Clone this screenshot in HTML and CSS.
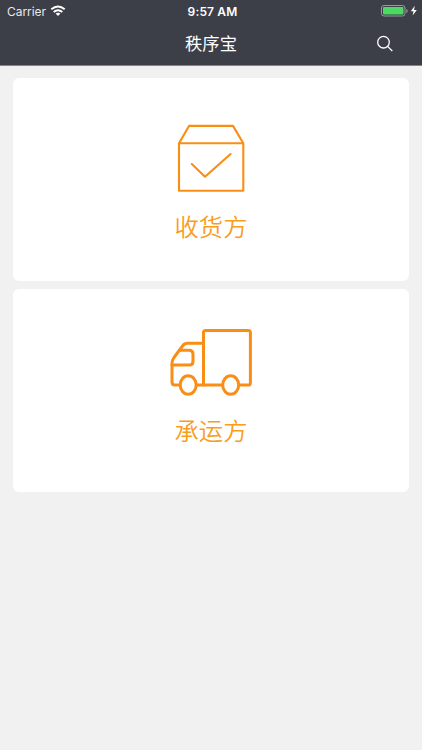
FILE: index.html
```html
<!DOCTYPE html>
<html lang="zh-CN">

<head>
    <meta charset="UTF-8">
    <meta name="viewport" content="width=device-width, initial-scale=1.0">
    <title>秩序宝</title>
    <link rel="stylesheet" href="styles.css">
</head>
<body>
    <header class="header">
        <div class="status-bar">
            <div class="carrier">
                <span>Carrier</span>
                <svg class="wifi" width="16" height="12" viewBox="0 0 16 12">
                    <path d="M1.3 4.3Q8 -1.3 14.7 4.3M3.7 7Q8 3.4 12.3 7" fill="none" stroke="#fff" stroke-width="2"/>
                    <path d="M5.6 8.6Q8 6.8 10.4 8.6L8 11z" fill="#fff"/>
                </svg>
            </div>
            <span class="time">9:57 AM</span>
            <svg class="battery" width="37" height="12" viewBox="0 0 37 12">
                <rect x="0.5" y="0.5" width="23.5" height="10.5" rx="2.5" fill="none" stroke="#9a9ba0"/>
                <rect x="2" y="2" width="20.5" height="7.5" rx="1" fill="#4cd964"/>
                <path d="M25.3 4v4q1.4-.6 1.4-2t-1.4-2z" fill="#9a9ba0"/>
                <path d="M33.8 .8L29.8 6.3H32.5L31.6 10.6L35.8 4.9H33z" fill="#fff"/>
            </svg>
        </div>
        <div class="nav-bar">
            <h1>秩序宝</h1>
            <button class="search" type="button" aria-label="搜索">
                <svg width="18" height="18" viewBox="0 0 18 18">
                    <circle cx="7.5" cy="7.2" r="5.8"/>
                    <path d="M11.6 11.4L16.3 16"/>
                </svg>
            </button>
        </div>
    </header>
    <main class="container">
        <a class="card">
            <svg class="icon-box" width="84" height="72" viewBox="0 0 84 72">
                <path d="M10 20.3L20 2.9H64L74.3 20.3V67.7H10zH74.3"/>
                <path d="M22.8 41L36 53.7L61.6 31"/>
            </svg>
            <span>收货方</span>
        </a>
        <a class="card">
            <svg class="icon-truck" width="84" height="72" viewBox="0 0 84 72">
                <path d="M53.5 62H34.5V9.5Q34.5 7.4 36.6 7.4H79.3Q81.4 7.4 81.4 9.5V59.9Q81.4 62 79.3 62H70"/>
                <path d="M34.5 20.3H18.5Q15.5 20.3 13.5 23L5 34.5Q3 37.5 3 40V59Q3 62 6 62H10.5M27.5 62H34.5"/>
                <path d="M11 27.3H20Q24 27.3 24 31.3V38.2Q24 42 20.5 42H3"/>
                <ellipse cx="19.2" cy="62" rx="8" ry="9.2"/>
                <ellipse cx="61.7" cy="62" rx="8" ry="9.2"/>
            </svg>
            <span>承运方</span>
        </a>
    </main>
</body>
</html>
```

FILE: styles.css
```css
/* Page */
body {
    margin: 0;
    min-height: 100vh;
    background-color: #f1f1f1;
    font-family: Inter, "Noto Sans CJK SC", sans-serif;
}

/* Header */
.header {
    height: 65px;
    background-color: #3c3e48;
    border-bottom: 1px solid #85868c;
    color: #fff;
}
.status-bar {
    display: grid;
    grid-template-columns: 1fr auto 1fr;
    align-items: center;
    height: 22px;
    padding: 0 4px 0 7px;
    font-size: 12px;
}
.carrier {
    display: flex;
    align-items: center;
    gap: 4px;
    color: #e8e8ea;
    letter-spacing: -0.05px;
}
.time {
    font-weight: 600;
    letter-spacing: 0.15px;
}
.battery {
    justify-self: end;
}
.nav-bar {
    display: grid;
    grid-template-columns: 1fr auto 1fr;
    align-items: center;
    height: 43px;
}
h1 {
    grid-column: 2;
    margin: 0;
    font-size: 17.3px;
    font-weight: 400;
    line-height: 43px;
}
.search {
    justify-self: end;
    display: flex;
    margin-right: 28px;
    padding: 0;
    border: none;
    background: none;
}
.search svg {
    fill: none;
    stroke: #fff;
    stroke-width: 1.3;
}

/* Cards */
.container {
    display: flex;
    flex-direction: column;
    gap: 8px;
    padding: 12px 13px;
}
.card {
    box-sizing: border-box;
    display: flex;
    flex-direction: column;
    align-items: center;
    height: 203px;
    padding-top: 45px;
    border-radius: 6px;
    background-color: #fff;
    color: #f99d1c;
    font-size: 24.3px;
    font-weight: 350;
}
.card + .card {
    padding-top: 34px;
}
.card span {
    line-height: 36px;
    margin-top: 14px;
}
.card + .card span {
    margin-top: 18px;
}
.card svg {
    fill: none;
    stroke: #fa8e14;
    stroke-linejoin: round;
    stroke-linecap: round;
}
.icon-box {
    stroke-width: 2.1;
}
.icon-truck {
    stroke-width: 3;
    overflow: visible;
}
```
